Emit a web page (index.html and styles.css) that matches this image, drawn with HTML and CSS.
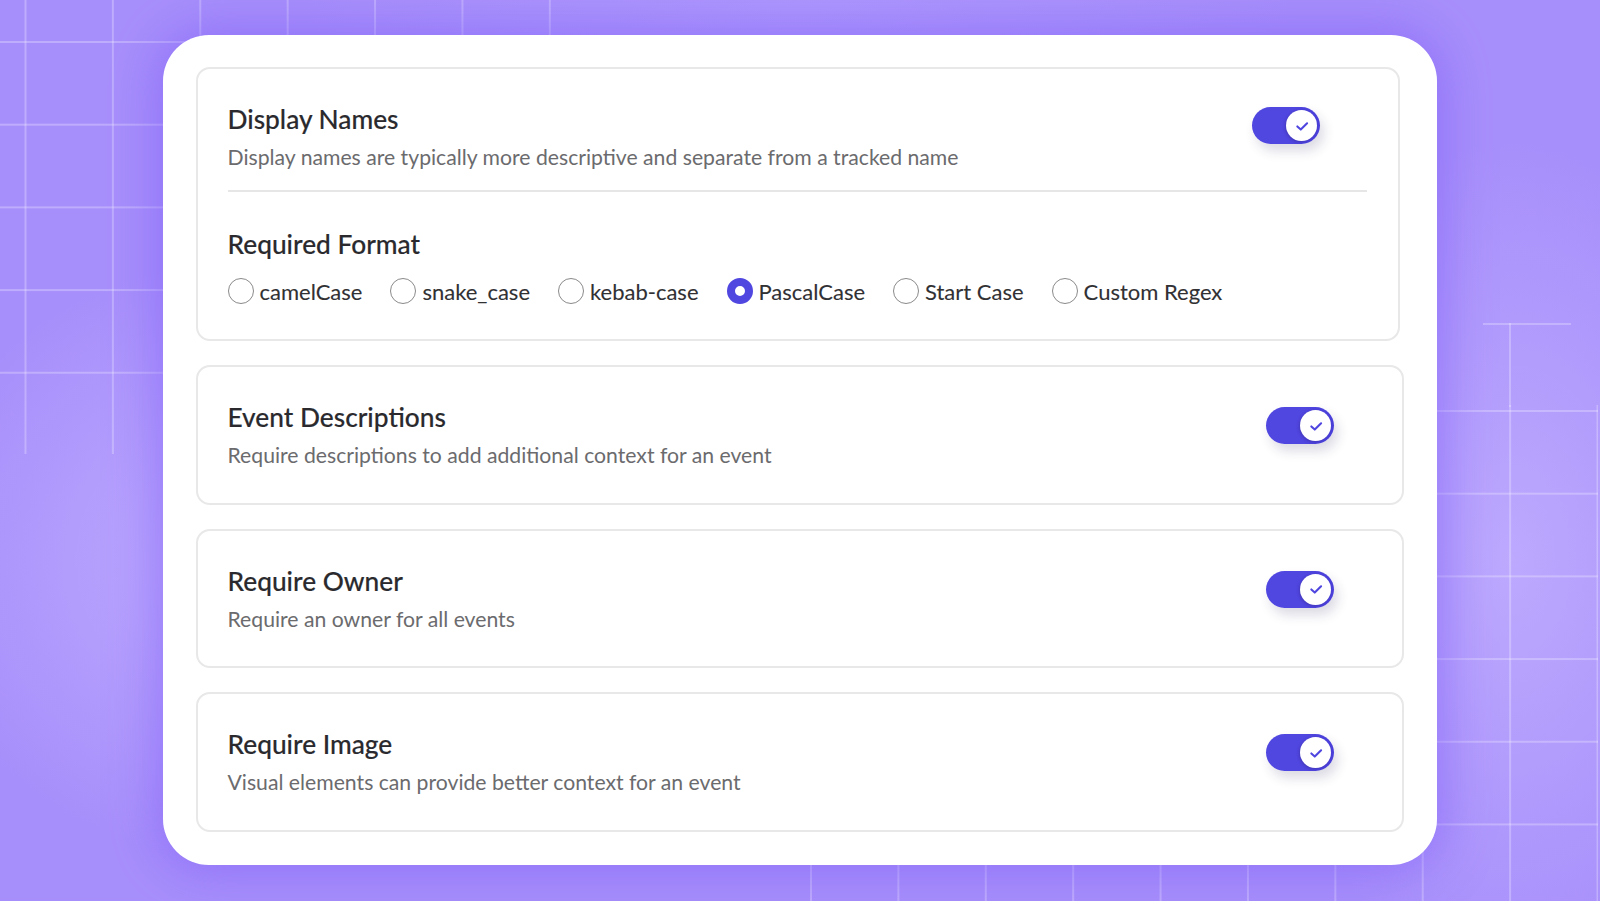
FILE: index.html
```html
<!DOCTYPE html>
<html lang="en">
<head>
<meta charset="utf-8">
<title>Event rules</title>
<link rel="stylesheet" href="styles.css">
</head>
<body>
<div class="grid grid-tl"></div>
<div class="grid grid-br"></div>
<div class="grid-stub"></div>
<main class="stage">
  <div class="card">
    <section class="panel panel-format">
      <div class="row row-first">
        <div class="text">
          <h2 class="title">Display Names</h2>
          <p class="desc">Display names are typically more descriptive and separate from a tracked name</p>
        </div>
        <span class="toggle toggle-first"><span class="knob"><svg viewBox="0 0 16 16" width="22" height="22"><path d="M4.6 8.3l2.5 2.3 4.6-4.6" fill="none" stroke="#4f46e0" stroke-width="1.5" stroke-linecap="round" stroke-linejoin="round"/></svg></span></span>
      </div>
      <div class="divider"></div>
      <h2 class="title subtitle">Required Format</h2>
      <div class="radios">
        <label class="radio"><span class="dot"></span>camelCase</label>
        <label class="radio"><span class="dot"></span>snake_case</label>
        <label class="radio"><span class="dot"></span>kebab-case</label>
        <label class="radio"><span class="dot dot-on"></span>PascalCase</label>
        <label class="radio"><span class="dot"></span>Start Case</label>
        <label class="radio"><span class="dot"></span>Custom Regex</label>
      </div>
    </section>
    <section class="panel">
      <div class="row">
        <div class="text">
          <h2 class="title">Event Descriptions</h2>
          <p class="desc">Require descriptions to add additional context for an event</p>
        </div>
        <span class="toggle"><span class="knob"><svg viewBox="0 0 16 16" width="22" height="22"><path d="M4.6 8.3l2.5 2.3 4.6-4.6" fill="none" stroke="#4f46e0" stroke-width="1.5" stroke-linecap="round" stroke-linejoin="round"/></svg></span></span>
      </div>
    </section>
    <section class="panel">
      <div class="row">
        <div class="text">
          <h2 class="title">Require Owner</h2>
          <p class="desc">Require an owner for all events</p>
        </div>
        <span class="toggle"><span class="knob"><svg viewBox="0 0 16 16" width="22" height="22"><path d="M4.6 8.3l2.5 2.3 4.6-4.6" fill="none" stroke="#4f46e0" stroke-width="1.5" stroke-linecap="round" stroke-linejoin="round"/></svg></span></span>
      </div>
    </section>
    <section class="panel">
      <div class="row">
        <div class="text">
          <h2 class="title">Require Image</h2>
          <p class="desc">Visual elements can provide better context for an event</p>
        </div>
        <span class="toggle"><span class="knob"><svg viewBox="0 0 16 16" width="22" height="22"><path d="M4.6 8.3l2.5 2.3 4.6-4.6" fill="none" stroke="#4f46e0" stroke-width="1.5" stroke-linecap="round" stroke-linejoin="round"/></svg></span></span>
      </div>
    </section>
  </div>
</main>
</body>
</html>
```
FILE: styles.css
```css
html, body {
  margin: 0;
  padding: 0;
}
body {
  width: 1600px;
  height: 901px;
  overflow: hidden;
  position: relative;
  font-family: "Lato", "Noto Sans", sans-serif;
  background:
    radial-gradient(ellipse 330px 300px at 240px 560px, rgba(198, 180, 255, 0.75), rgba(198, 180, 255, 0) 100%),
    radial-gradient(ellipse 260px 420px at 1510px 560px, rgba(198, 180, 255, 0.7), rgba(198, 180, 255, 0) 100%),
    radial-gradient(ellipse 500px 200px at 800px 0px, rgba(180, 160, 255, 0.5), rgba(180, 160, 255, 0) 100%),
    #a78ffb;
}

.grid {
  position: absolute;
  pointer-events: none;
}
.grid-tl {
  left: 0;
  top: 0;
  width: 560px;
  height: 454px;
  background-image:
    linear-gradient(to right, rgba(255, 255, 255, 0.26) 2px, transparent 2px),
    linear-gradient(to bottom, rgba(255, 255, 255, 0.26) 2px, transparent 2px);
  background-size: 87.4px 100%, 100% 82.7px;
  background-position: 24.5px 0, 0 41px;
}
.grid-br {
  left: 800px;
  top: 405px;
  width: 798px;
  height: 496px;
  background-image:
    linear-gradient(to right, rgba(255, 255, 255, 0.26) 2px, transparent 2px),
    linear-gradient(to bottom, rgba(255, 255, 255, 0.26) 2px, transparent 2px);
  background-size: 87.4px 100%, 100% 82.7px;
  background-position: 10px 0, 0 5px;
}
.grid-stub {
  position: absolute;
  left: 1483px;
  top: 323px;
  width: 88px;
  height: 78px;
  border-top: 2px solid rgba(255, 255, 255, 0.26);
  background: linear-gradient(to right, transparent 26px, rgba(255, 255, 255, 0.26) 26px, rgba(255, 255, 255, 0.26) 28px, transparent 28px);
  padding-top: 4px;
  box-sizing: content-box;
}

.stage {
  position: relative;
  padding: 35px 0 0 163px;
}
.card {
  width: 1274px;
  height: 830px;
  box-sizing: border-box;
  background: #ffffff;
  border-radius: 46px;
  padding: 32px 33px 33px 33px;
  display: flex;
  flex-direction: column;
  gap: 24px;
  box-shadow: 0 0 46px 8px rgba(128, 92, 248, 0.55);
}

.panel {
  box-sizing: border-box;
  height: 140px;
  border: 2px solid #e8e8e8;
  border-radius: 14px;
  padding: 34px 68px 0 29.5px;
}
.panel-format {
  height: 275px;
  margin-right: 4px;
  padding-right: 31px;
}

.row {
  display: flex;
  justify-content: space-between;
  align-items: flex-start;
}
.title {
  margin: 0;
  font-size: 26.3px;
  line-height: 32px;
  font-weight: 500;
  color: #2a2a2e;
  -webkit-text-stroke: 0.15px #2a2a2e;
}
.desc {
  margin: 8px 0 0;
  font-size: 21.2px;
  line-height: 28px;
  font-weight: 400;
  color: #6b6b6e;
}

.toggle {
  position: relative;
  display: flex;
  justify-content: flex-end;
  align-items: center;
  box-sizing: border-box;
  width: 68px;
  height: 37px;
  margin-top: 6px;
  padding-right: 3px;
  border-radius: 19px;
  background: linear-gradient(to right, #5046e0 55%, #4a3fd9 100%);
  box-shadow: 4px 7px 12px rgba(40, 30, 90, 0.16);
}
.toggle-first {
  margin-top: 4px;
  margin-right: 47px;
}
.knob {
  width: 31px;
  height: 31px;
  border-radius: 50%;
  background: #ffffff;
  display: flex;
  align-items: center;
  justify-content: center;
  box-shadow: -1px 1px 3px rgba(30, 20, 80, 0.25);
}

.divider {
  height: 2px;
  background: #e6e6e6;
  margin-top: 19px;
}
.subtitle {
  margin-top: 36px;
}

.radios {
  display: flex;
  align-items: center;
  gap: 28px;
  margin-top: 17px;
}
.radio {
  display: flex;
  align-items: center;
  gap: 6px;
  height: 28px;
  font-size: 22px;
  color: #313134;
  -webkit-text-stroke: 0.1px #313134;
}
.dot {
  box-sizing: border-box;
  width: 26px;
  height: 26px;
  border-radius: 50%;
  border: 1.5px solid #8a8a8a;
  background: #ffffff;
}
.dot-on {
  border: 8.5px solid #5046e0;
  background: #ffffff;
}
```
